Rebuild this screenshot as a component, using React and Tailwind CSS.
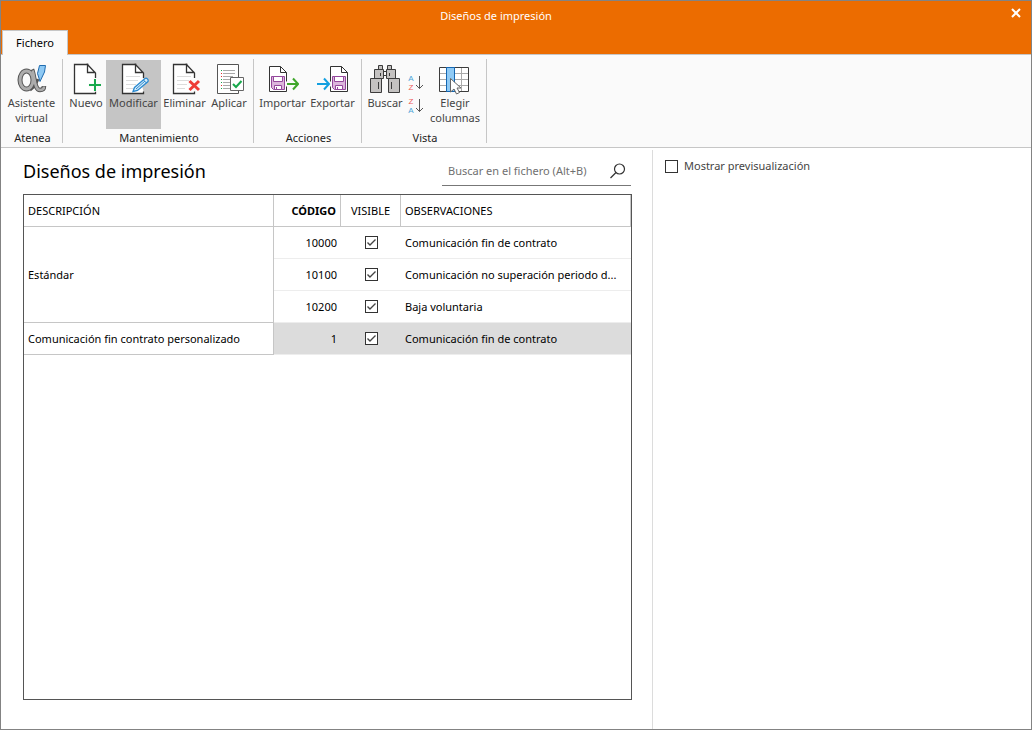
import { useState } from "react";

function Icono({ children }) {
    return (
        <svg width="32" height="32" viewBox="0 0 32 32" fill="none" className="shrink-0" aria-hidden="true">
            {children}
        </svg>
    );
}

/* hoja en blanco con la esquina doblada */
function Hoja() {
    return (
        <>
            <path d="M18.500 30.500H4.500V1.500H17.500L25.500 9.500V16" fill="#fff" stroke="none" />
            <path d="M18.500 1.500H4.500V30.500H25.500V28.500M25.500 15V10L17.500 1.500V9.500H25.500" fill="#fff" stroke="#333" strokeWidth="1.300" />
        </>
    );
}

function LineasHoja() {
    return <path d="M8 13.500H22M8 17.500H20M8 21.500H18M8 25.500H16" stroke="#dcdcdc" />;
}

function IconoAlfa() {
    return (
        <Icono>
            {/* contorno oscuro y relleno gris encima */}
            <ellipse cx="10.500" cy="17" rx="6.500" ry="9" stroke="#555" strokeWidth="5" />
            <path d="M16 6.500C19 13 18 27 24 27C27 27 28 25.500 28 23" stroke="#555" strokeWidth="4.500" />
            <path d="M22 16C20 21 17 25 14 27" stroke="#555" strokeWidth="3" />
            <ellipse cx="10.500" cy="17" rx="6.500" ry="9" stroke="#acacac" strokeWidth="3" />
            <path d="M16.500 7.500C19 13 18 27 24 27C26.500 27 28 25.500 28 23.500" stroke="#acacac" strokeWidth="2.500" />
            <path d="M23.500 2.500H29.500L28.500 9L24 18.500L21.500 10.500Z" fill="#8ec9f4" stroke="#1f6cb0" />
        </Icono>
    );
}

function IconoNuevo() {
    return (
        <Icono>
            <Hoja />
            <path d="M25 15.500V28.500M18.500 22H31.500" stroke="#fafafa" strokeWidth="4" />
            <path d="M25 16V28M19 22H31" stroke="#18a84c" strokeWidth="2" />
        </Icono>
    );
}

function IconoModificar() {
    return (
        <Icono>
            <Hoja />
            <LineasHoja />
            <path d="M15 28.500L16.500 24.500L27 15.500C28.500 14.500 31 16.500 30 18.500L19.500 27.500Z" fill="#d7ecfa" stroke="#2a8ad0" strokeWidth="1.300" />
            <path d="M25.500 17L28.500 20M18 26L27 18" stroke="#2a8ad0" />
        </Icono>
    );
}

function IconoEliminar() {
    return (
        <Icono>
            <Hoja />
            <LineasHoja />
            <path d="M20.500 18L30 27M30 18L20.500 27" stroke="#fafafa" strokeWidth="6" />
            <path d="M20.500 18L30 27M30 18L20.500 27" stroke="#ee3c37" strokeWidth="3" />
        </Icono>
    );
}

function IconoAplicar() {
    return (
        <Icono>
            <path d="M4.500 1.500H25.500V30.500H4.500Z" fill="#fff" stroke="#555" />
            <path d="M10 7.500H22M10 10.500H22M10 13.500H20M10 16.500H17M10 19.500H17M10 22.500H17M10 25.500H17" stroke="#aaa" />
            <path d="M8 7.500H9M8 16.500H9M8 19.500H9M8 25.500H9" stroke="#18a84c" />
            <path d="M8 10.500H9M8 13.500H9M8 22.500H9" stroke="#e03030" />
            <path d="M17.500 14.500H30.500V27.500H17.500Z" fill="#fff" stroke="#666" />
            <path d="M20 21L23 24L28.500 18" stroke="#18a84c" strokeWidth="2" />
        </Icono>
    );
}

/* hoja con disquete, comun a importar y exportar */
function HojaDisquete({ x }) {
    return (
        <g transform={`translate(${x} 0)`}>
            <path d="M0.500 3.500H11.500L17.500 9.500V28.500H0.500Z" fill="#fff" stroke="#333" />
            <path d="M11.500 3.500V9.500H17.500" stroke="#333" />
            <path d="M2.500 13.500H15.500V26.500H4.500L2.500 24.500Z" fill="#dcb6dc" stroke="#93479b" />
            <path d="M4.500 13.500H13.500V18.500H4.500Z" fill="#fff" stroke="#93479b" />
            <path d="M5.500 22.500H12.500V26.500H5.500Z" fill="#fff" stroke="#93479b" />
            <path d="M7.500 24V26" stroke="#93479b" />
        </g>
    );
}

function IconoImportar() {
    return (
        <Icono>
            <HojaDisquete x={2} />
            <path d="M18 21H30" stroke="#fafafa" strokeWidth="5" />
            <path d="M20 21H31M26 15.500L31 21L26 26.500" stroke="#3fa62b" strokeWidth="2" />
        </Icono>
    );
}

function IconoExportar() {
    return (
        <Icono>
            <HojaDisquete x={13} />
            <path d="M9 21H14" stroke="#fafafa" strokeWidth="5" />
            <path d="M0 21H12M7 15.500L12 21L7 26.500" stroke="#129fe0" strokeWidth="2" />
        </Icono>
    );
}

function IconoBuscar() {
    return (
        <Icono>
            <g fill="#c4c2c1" stroke="#3c3c3c">
                <path d="M9.500 2.500H13.500V6.500H9.500ZM18.500 2.500H22.500V6.500H18.500Z" />
                <path d="M14.500 8.500H17.500V12.500H14.500Z" fill="#fafafa" />
                <path d="M5.500 6.500H14.500V15.500H5.500ZM17.500 6.500H26.500V15.500H17.500Z" />
                <path d="M1.500 15.500H12.500V29.500H1.500ZM19.500 15.500H30.500V29.500H19.500Z" />
                <path d="M11.500 10V13M20.500 10V13M9.500 19V26M22.500 19V26" />
            </g>
        </Icono>
    );
}

function IconoColumnas() {
    return (
        <Icono>
            <path d="M0.500 4.500H29.500V28.500H0.500Z" fill="#fff" />
            <path d="M0 10.500H30M0 16.500H30M0 22.500H30M22.500 4V28" stroke="#aaa" />
            <path d="M0.500 4.500H29.500V28.500H0.500Z" stroke="#3c3c3c" />
            <path d="M7.500 4.500H15.500V28.500H7.500Z" fill="#8fcaf5" stroke="#1467b3" />
            <path d="M11.500 15.500V29L15 26L17.500 31L20.500 29.500L18 25H22Z" fill="#fff" stroke="#666" />
        </Icono>
    );
}

/* letras con la flecha de orden a la derecha */
function IconoOrden({ arriba, abajo, colorArriba, colorAbajo }) {
    return (
        <span className="flex items-center gap-px">
            <span className="flex flex-col font-['Liberation_Sans',sans-serif] text-[8px] leading-[9px]">
                <span className={colorArriba}>{arriba}</span>
                <span className={colorAbajo}>{abajo}</span>
            </span>
            <svg width="9" height="14" viewBox="0 0 9 14" fill="none" stroke="#555" aria-hidden="true">
                <path d="M4.500 0V12.500M1 9L4.500 12.500L8 9" />
            </svg>
        </span>
    );
}

function BotonCinta({ icono, texto, activo, ancho }) {
    return (
        <button
            type="button"
            aria-pressed={activo}
            className={`flex h-[69px] flex-col items-center pt-[3px] text-[#444] ${ancho} ${activo ? "bg-[#c5c5c5]" : "hover:bg-[#e5e5e5]"}`}
        >
            {icono}
            <span className="text-[11px] leading-[15px]">{texto}</span>
        </button>
    );
}

function GrupoCinta({ titulo, ancho, children }) {
    return (
        <div className={`flex flex-col border-r border-[#c6c6c6] ${ancho}`}>
            <div className="flex justify-center pt-px">{children}</div>
            <span className="mt-[3px] pl-[2px] text-center text-[11px] leading-[12px] text-[#222]">{titulo}</span>
        </div>
    );
}

function Casilla({ id, etiqueta, marcada, onChange }) {
    return (
        <span className="relative inline-flex size-[13px] shrink-0">
            <input
                id={id}
                type="checkbox"
                aria-label={etiqueta}
                checked={marcada}
                onChange={onChange}
                className="size-[13px] appearance-none border border-[#333] bg-white"
            />
            {marcada && (
                <svg width="13" height="13" viewBox="0 0 13 13" fill="none" className="pointer-events-none absolute inset-0" aria-hidden="true">
                    <path d="M2.500 6.500L5 9L10.500 3.500" stroke="#444" strokeWidth="1.400" />
                </svg>
            )}
        </span>
    );
}

const filasIniciales = [
    { codigo: 10000, visible: true, observaciones: "Comunicación fin de contrato", descripcion: "Estándar", filas: 3 },
    { codigo: 10100, visible: true, observaciones: "Comunicación no superación periodo d..." },
    { codigo: 10200, visible: true, observaciones: "Baja voluntaria" },
    { codigo: 1, visible: true, observaciones: "Comunicación fin de contrato", descripcion: "Comunicación fin contrato personalizado", filas: 1 },
];

function App() {
    const [filas, setFilas] = useState(filasIniciales);
    const [previsualizar, setPrevisualizar] = useState(false);
    const [busqueda, setBusqueda] = useState("");

    const cambiarVisible = (codigo) => {
        setFilas(filas.map((f) => (f.codigo === codigo ? { ...f, visible: !f.visible } : f)));
    };

    return (
        <div className="flex h-screen flex-col border border-[#838383] bg-white font-['Noto_Sans','Open_Sans',sans-serif] text-[11px] text-black">

            {/* barra de titulo */}
            <header className="flex flex-col bg-[#ec6c00]">
                <div className="grid h-[29px] grid-cols-[1fr_auto_1fr_40px] items-center">
                    <span className="col-start-2 pt-[2px] text-white">Diseños de impresión</span>
                    <button type="button" aria-label="Cerrar" className="col-start-4 mr-[9px] mb-[6px] justify-self-end p-px text-white">
                        <svg width="10" height="10" viewBox="0 0 10 10" fill="none" stroke="currentColor" strokeWidth="2">
                            <path d="M1 1L9 9M9 1L1 9" />
                        </svg>
                    </button>
                </div>
                <div className="flex border-b border-[#c6c6c6]">
                    <button type="button" className="-mb-px ml-px h-[25px] w-[66px] border border-b-0 border-[#c6c6c6] bg-[#fafafa] text-black">
                        Fichero
                    </button>
                </div>
            </header>

            {/* cinta de opciones */}
            <nav className="flex h-[93px] shrink-0 border-b border-[#c6c6c6] bg-[#fafafa] py-1">
                <GrupoCinta titulo="Atenea" ancho="w-[62px]">
                    <BotonCinta icono={<IconoAlfa />} texto={<>Asistente<br />virtual</>} ancho="w-[58px]" />
                </GrupoCinta>
                <GrupoCinta titulo="Mantenimiento" ancho="w-[191px]">
                    <BotonCinta icono={<IconoNuevo />} texto="Nuevo" ancho="w-[40px]" />
                    <BotonCinta icono={<IconoModificar />} texto="Modificar" ancho="w-[55px]" activo />
                    <BotonCinta icono={<IconoEliminar />} texto="Eliminar" ancho="w-[47px]" />
                    <BotonCinta icono={<IconoAplicar />} texto="Aplicar" ancho="w-[42px]" />
                </GrupoCinta>
                <GrupoCinta titulo="Acciones" ancho="w-[108px]">
                    <BotonCinta icono={<IconoImportar />} texto="Importar" ancho="w-[50px]" />
                    <BotonCinta icono={<IconoExportar />} texto="Exportar" ancho="w-[50px]" />
                </GrupoCinta>
                <GrupoCinta titulo="Vista" ancho="w-[125px]">
                    <BotonCinta icono={<IconoBuscar />} texto="Buscar" ancho="w-[40px]" />
                    <div className="flex w-[22px] flex-col items-center gap-[5px] pt-[14px]">
                        <button type="button" aria-label="Orden ascendente">
                            <IconoOrden arriba="A" abajo="Z" colorArriba="text-[#4ba3d8]" colorAbajo="text-[#ee5a5a]" />
                        </button>
                        <button type="button" aria-label="Orden descendente">
                            <IconoOrden arriba="Z" abajo="A" colorArriba="text-[#ee5a5a]" colorAbajo="text-[#4ba3d8]" />
                        </button>
                    </div>
                    <BotonCinta icono={<IconoColumnas />} texto={<>Elegir<br />columnas</>} ancho="w-[56px]" />
                </GrupoCinta>
            </nav>

            <main className="flex min-h-0 flex-1 pt-[2px]">
                {/* listado */}
                <section className="flex w-[652px] shrink-0 flex-col border-r border-[#dcdcdc] pr-5 pb-[29px] pl-[22px]">
                    <div className="flex h-[36px] items-center justify-between pr-px">
                        <h1 className="pt-[6px] text-[18px] leading-[24px]">Diseños de impresión</h1>
                        <div className="mt-[7px] flex h-[29px] w-[189px] items-center border-b border-[#777] pr-[5px] pl-[6px]">
                            <input
                                type="text"
                                aria-label="Buscar en el fichero"
                                placeholder="Buscar en el fichero (Alt+B)"
                                value={busqueda}
                                onChange={(e) => setBusqueda(e.target.value)}
                                className="min-w-0 flex-1 outline-none placeholder:text-[#707070]"
                            />
                            <button type="button" aria-label="Buscar">
                                <svg width="16" height="16" viewBox="0 0 16 16" fill="none" stroke="#333" strokeWidth="1.200">
                                    <circle cx="9.500" cy="6" r="5" />
                                    <path d="M6 9.500L0.500 15" />
                                </svg>
                            </button>
                        </div>
                    </div>

                    <div className="mt-2 min-h-0 flex-1 border border-[#555]">
                        <table className="w-full table-fixed border-separate border-spacing-0">
                            <thead>
                                <tr className="h-8 text-left">
                                    <th className="w-[250px] border-r border-b border-[#c6c6c6] px-1 pt-[2px] font-normal">DESCRIPCIÓN</th>
                                    <th className="w-[67px] border-r border-b border-[#c6c6c6] px-1 pt-[2px] text-right font-bold">CÓDIGO</th>
                                    <th className="w-[60px] border-r border-b border-[#c6c6c6] pt-[2px] text-center font-normal">VISIBLE</th>
                                    <th className="border-r border-b border-[#c6c6c6] px-1 pt-[2px] font-normal">OBSERVACIONES</th>
                                </tr>
                            </thead>
                            <tbody>
                                {filas.map((f) => (
                                    <tr key={f.codigo} className={f.codigo === 1 ? "h-8 bg-[#dcdcdc]" : "h-8"}>
                                        {f.filas && (
                                            <td rowSpan={f.filas} className="border-r border-b border-[#c6c6c6] bg-white px-1 pt-[2px]">
                                                {f.descripcion}
                                            </td>
                                        )}
                                        <td className="border-b border-[#ededed] px-1 pt-[2px] text-right">{f.codigo}</td>
                                        <td className="border-b border-[#ededed]">
                                            <div className="flex justify-center">
                                                <Casilla
                                                    etiqueta={`Visible ${f.codigo}`}
                                                    marcada={f.visible}
                                                    onChange={() => cambiarVisible(f.codigo)}
                                                />
                                            </div>
                                        </td>
                                        <td className="border-b border-[#ededed] px-1 pt-[2px] whitespace-nowrap">{f.observaciones}</td>
                                    </tr>
                                ))}
                            </tbody>
                        </table>
                    </div>
                </section>

                {/* previsualizacion */}
                <section className="flex-1 px-3 pt-2">
                    <div className="flex items-center gap-[6px]">
                        <Casilla id="previsualizar" marcada={previsualizar} onChange={(e) => setPrevisualizar(e.target.checked)} />
                        <label htmlFor="previsualizar" className="text-[#444]">Mostrar previsualización</label>
                    </div>
                </section>
            </main>
        </div>
    );
}

export default App;
